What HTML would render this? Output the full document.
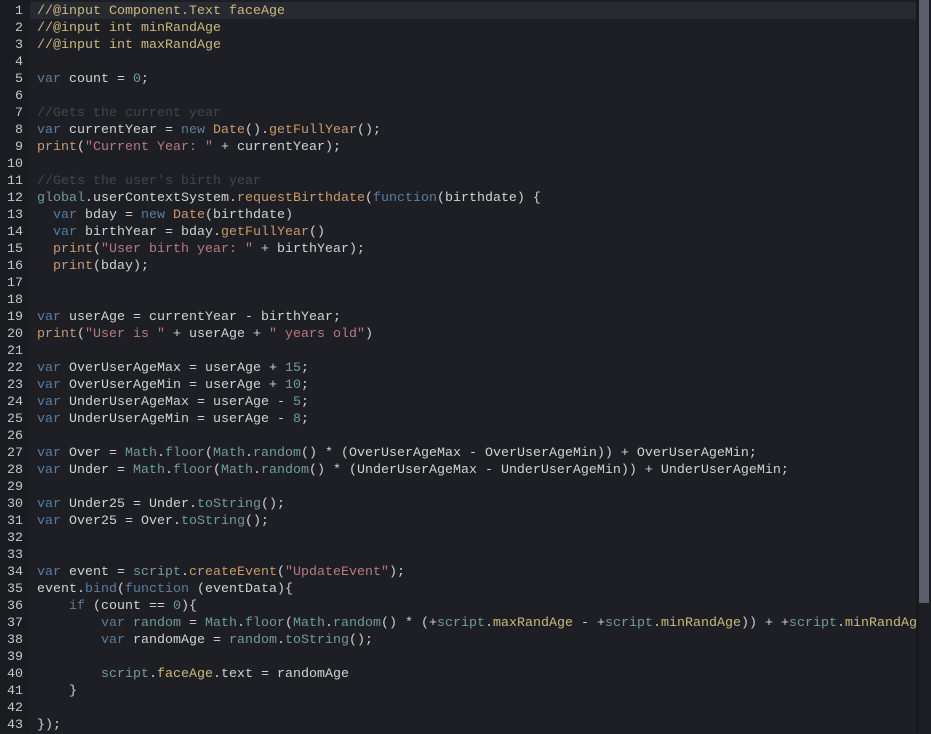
<!DOCTYPE html>
<html><head><meta charset="utf-8"><style>
html,body{margin:0;padding:0;background:#1e1f24;width:931px;height:732px;overflow:hidden}
.g{position:absolute;left:0;top:0;width:30px;height:732px;background:#1b1c21}
.hl{position:absolute;left:30px;top:2px;width:886px;height:17px;background:#282a31}
.sb1{position:absolute;left:916px;top:0;width:3px;height:732px;background:#17181c}
.sb{position:absolute;left:919px;top:0;width:10px;height:603px;background:#5b5e6d}
.sb2{position:absolute;left:929px;top:0;width:2px;height:732px;background:#1e1f24}
pre{position:absolute;margin:0;top:3px;font-family:"Liberation Mono",monospace;font-size:13.33px;line-height:17px;color:#d2d2d2}
.nums{left:0;width:23px;text-align:right;color:#c8c8c8}
.code{left:37px;width:879px;overflow:hidden}
.k{color:#5b7d9f}.c{color:#42464e}.y{color:#cbb87c}.o{color:#c89b6a}.s{color:#b77a82}.t{color:#6f9e95}
</style></head><body>
<div class="g"></div><div class="hl"></div>
<pre class="nums">1
2
3
4
5
6
7
8
9
10
11
12
13
14
15
16
17
18
19
20
21
22
23
24
25
26
27
28
29
30
31
32
33
34
35
36
37
38
39
40
41
42
43</pre>
<pre class="code"><span class="y">//@input Component.Text faceAge</span>
<span class="y">//@input int minRandAge</span>
<span class="y">//@input int maxRandAge</span>

<span class="k">var</span> count = <span class="t">0</span>;

<span class="c">//Gets the current year</span>
<span class="k">var</span> currentYear = <span class="k">new</span> <span class="o">Date</span>().<span class="o">getFullYear</span>();
<span class="o">print</span>(<span class="s">"Current Year: "</span> + currentYear);

<span class="c">//Gets the user's birth year</span>
<span class="t">global</span>.userContextSystem.<span class="o">requestBirthdate</span>(<span class="k">function</span>(birthdate) {
  <span class="k">var</span> bday = <span class="k">new</span> <span class="o">Date</span>(birthdate)
  <span class="k">var</span> birthYear = bday.<span class="o">getFullYear</span>()
  <span class="o">print</span>(<span class="s">"User birth year: "</span> + birthYear);
  <span class="o">print</span>(bday);


<span class="k">var</span> userAge = currentYear - birthYear;
<span class="o">print</span>(<span class="s">"User is "</span> + userAge + <span class="s">" years old"</span>)

<span class="k">var</span> OverUserAgeMax = userAge + <span class="t">15</span>;
<span class="k">var</span> OverUserAgeMin = userAge + <span class="t">10</span>;
<span class="k">var</span> UnderUserAgeMax = userAge - <span class="t">5</span>;
<span class="k">var</span> UnderUserAgeMin = userAge - <span class="t">8</span>;

<span class="k">var</span> Over = <span class="t">Math</span>.<span class="t">floor</span>(<span class="t">Math</span>.<span class="t">random</span>() * (OverUserAgeMax - OverUserAgeMin)) + OverUserAgeMin;
<span class="k">var</span> Under = <span class="t">Math</span>.<span class="t">floor</span>(<span class="t">Math</span>.<span class="t">random</span>() * (UnderUserAgeMax - UnderUserAgeMin)) + UnderUserAgeMin;

<span class="k">var</span> Under25 = Under.<span class="t">toString</span>();
<span class="k">var</span> Over25 = Over.<span class="t">toString</span>();


<span class="k">var</span> event = <span class="t">script</span>.<span class="o">createEvent</span>(<span class="s">"UpdateEvent"</span>);
event.<span class="k">bind</span>(<span class="k">function</span> (eventData){
    <span class="k">if</span> (count == <span class="t">0</span>){
        <span class="k">var</span> <span class="t">random</span> = <span class="t">Math</span>.<span class="t">floor</span>(<span class="t">Math</span>.<span class="t">random</span>() * (+<span class="t">script</span>.<span class="y">maxRandAge</span> - +<span class="t">script</span>.<span class="y">minRandAge</span>)) + +<span class="t">script</span>.<span class="y">minRandAge</span>;
        <span class="k">var</span> randomAge = <span class="t">random</span>.<span class="t">toString</span>();

        <span class="t">script</span>.<span class="y">faceAge</span>.text = randomAge
    }

});</pre>
<div class="sb1"></div><div class="sb"></div><div class="sb2"></div>
</body></html>
